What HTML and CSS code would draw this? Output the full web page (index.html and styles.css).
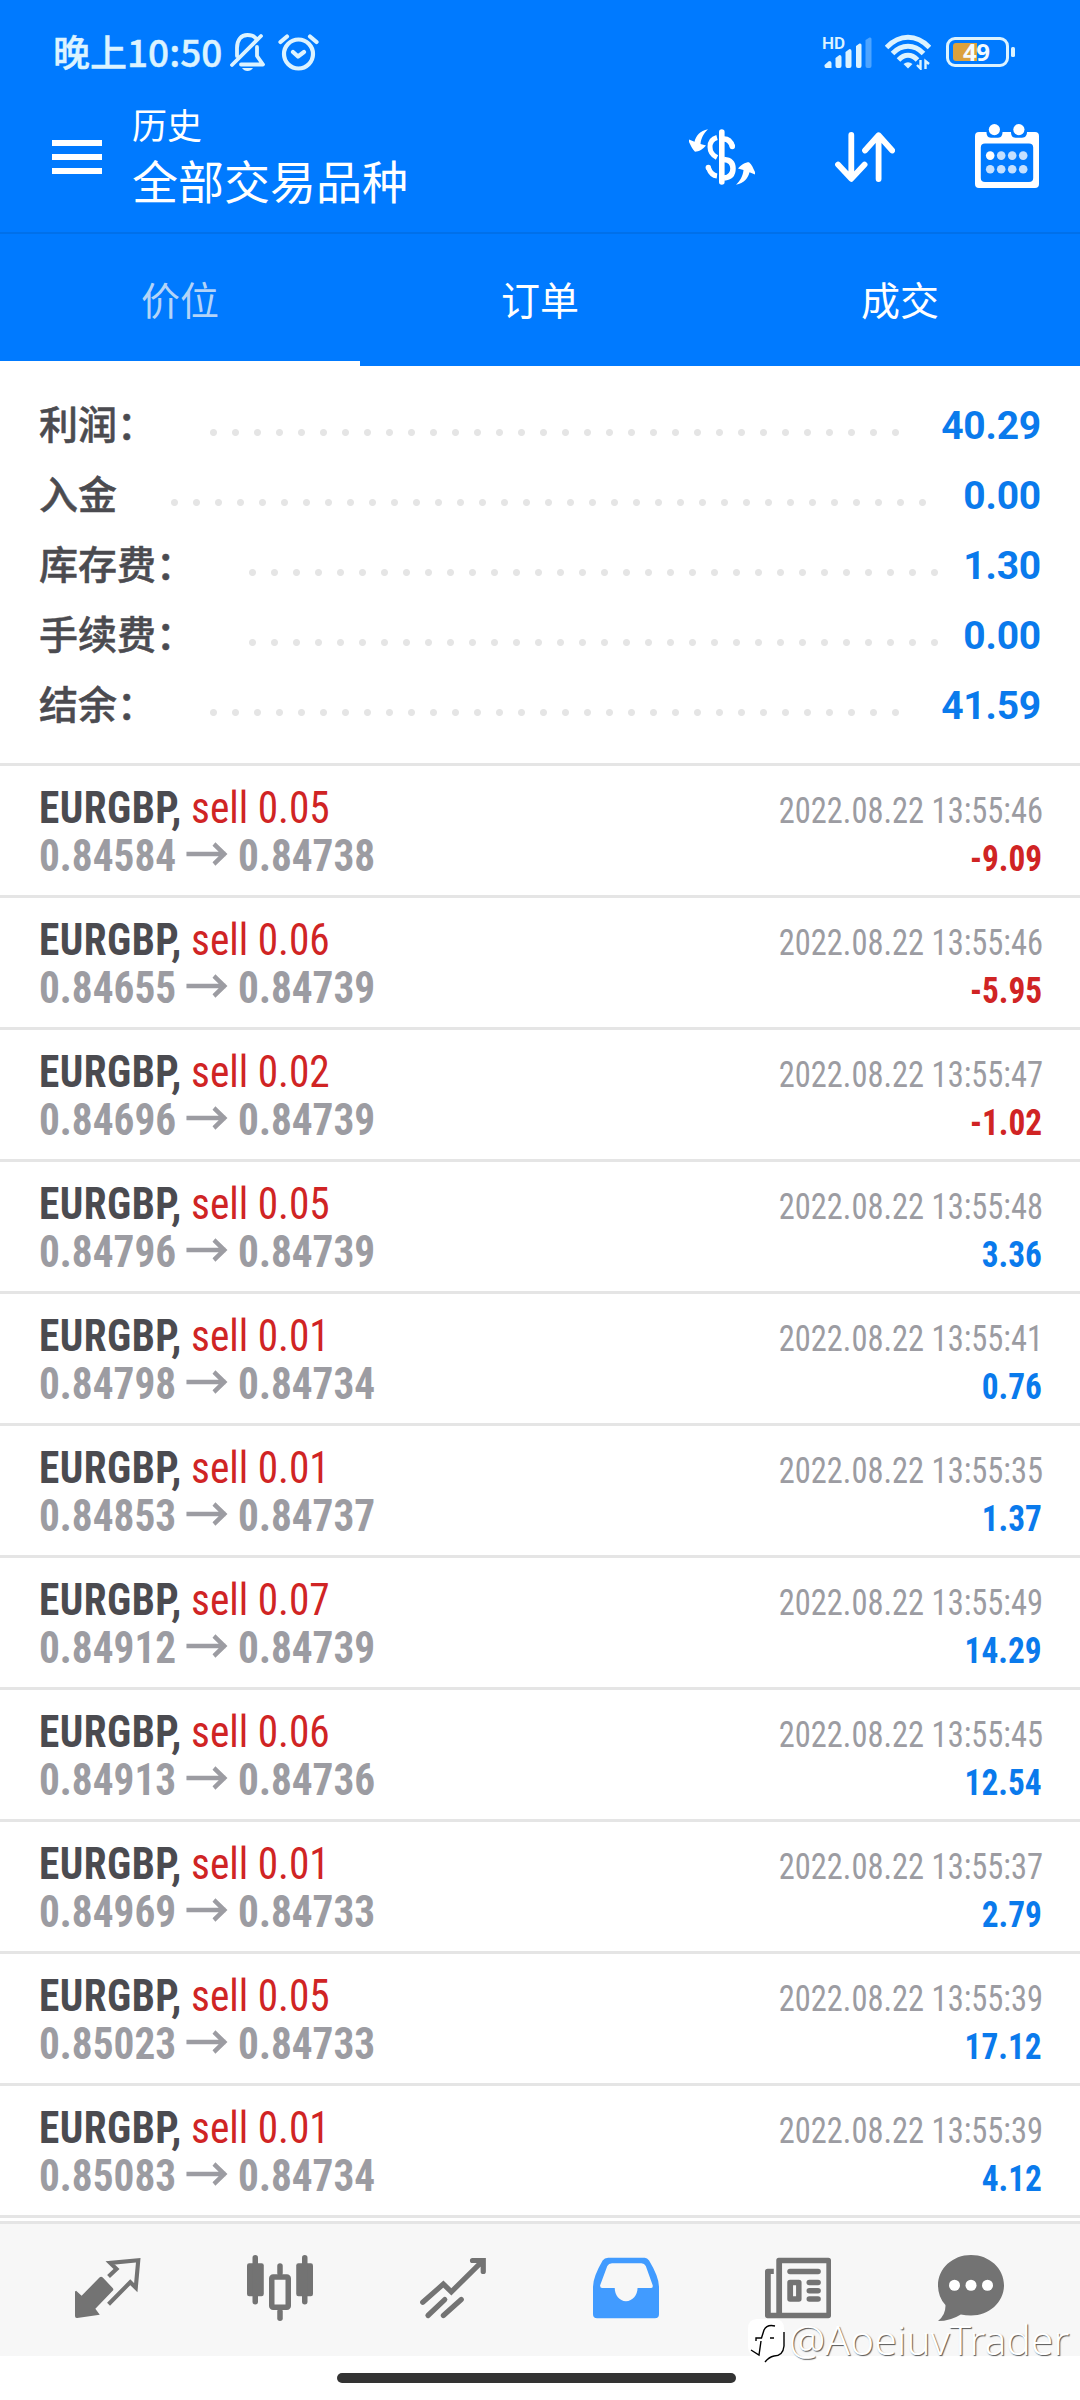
FILE: index.html
```html
<!DOCTYPE html>
<html lang="zh-CN">
<head>
<meta charset="utf-8">
<title>历史</title>
<link rel="stylesheet" href="styles.css">
</head>
<body>
<header class="header">
  <div class="status">
    <span class="clock">晚上10:50</span>
    <svg class="bell" width="36" height="38" viewBox="0 0 36 38" fill="none" stroke="currentColor" stroke-width="3.8" stroke-linecap="round" stroke-linejoin="round"><path d="M2 32L31 3M7 23V15C7 7 11 2 17.500 2C21 2 24 3 25.500 5M27 14V23L33 31.500H11"/><path d="M12 35H23Q21 38 17.500 38T12 35Z" fill="currentColor" stroke="none"/></svg>
    <svg class="alarm" width="41" height="38" viewBox="0 0 41 38" fill="none" stroke="currentColor" stroke-width="4.200" stroke-linecap="round" stroke-linejoin="round"><circle cx="20.500" cy="21" r="14.500"/><path d="M15 19L20 23.500L26 19M2.500 9L9 3.500M38.500 9L32 3.500"/></svg>
    <span class="spacer"></span>
    <span class="hd">HD</span>
    <svg class="signal" width="51" height="34" viewBox="0 0 51 34" fill="currentColor"><path d="M2.500 30L7 26Q9.500 26 9.500 28V33H4Q2.500 33 2.500 31ZM13.500 23L17.500 20Q19.500 20 19.500 22V31Q19.500 33 17.500 33H15.500Q13.500 33 13.500 31ZM23.500 17L27.500 14Q29.500 14 29.500 16V31Q29.500 33 27.500 33H25.500Q23.500 33 23.500 31ZM34 11L37.500 8.500Q39.500 8 39.500 10V31Q39.500 33 37.500 33H36Q34 33 34 31Z"/><path opacity=".35" d="M43.500 5L47.500 2.500Q49.500 2 49.500 4V31Q49.500 33 47.500 33H45.500Q43.500 33 43.500 31Z"/></svg>
    <svg class="wifi" width="46" height="36" viewBox="0 0 46 36" fill="none" stroke="currentColor" stroke-width="5"><path d="M1.500 13.500Q11.500 3.300 23 3.300T44.500 13.500M7.500 19.500Q14.500 12.300 23 12.300T38.500 19.500M13.500 26Q18 21.300 23 21.300T32.500 26"/><path d="M18.500 30Q23 26.500 27.500 30L23 34.500Z" fill="currentColor" stroke="none"/><path d="M35.500 26V34.500L32 31M40.500 35V27L44 30" stroke-width="2.400"/></svg>
    <div class="battery"><svg width="70" height="30" viewBox="0 0 70 30"><rect x="1.500" y="1.500" width="60" height="27" rx="7.500" fill="none" stroke="currentColor" stroke-width="3"/><path d="M10 6H31V24H10Q7 24 7 21V9Q7 6 10 6Z" fill="#dba13d"/><rect x="65" y="10" width="4" height="10" rx="1.500" fill="currentColor"/></svg><span class="level">49</span></div>
  </div>
  <div class="toolbar">
    <svg class="menu" width="50" height="34" viewBox="0 0 50 34" fill="#fff"><path d="M0 0H50V6H0ZM0 14H50V20H0ZM0 28H50V34H0Z"/></svg>
    <div class="titles"><div class="title">历史</div><div class="subtitle">全部交易品种</div></div>
    <svg class="money" width="66" height="56" viewBox="0 0 66 56" fill="none" stroke="#fff" stroke-width="5"><path d="M32.800 3V53" stroke-width="5.600" stroke-linecap="round"/><path d="M28 8.500C22.500 10 21 14 21 18C21 23 23 26 28 28.500M28 47C24 46.500 21 43 19.500 39"/><circle cx="19.300" cy="38.500" r="2.700" fill="#fff" stroke="none"/><path d="M35 10C40 10 42 13 43.500 17.500M35 30.500C41 31 44 34 44 39.500C44 45 41 48.500 35 49" stroke-width="5.500"/><circle cx="43.300" cy="17.500" r="2.700" fill="#fff" stroke="none"/><g fill="#fff" stroke="none"><path id="swoop" d="M19 .3C11 2 7 6.500 5.500 12.800L0 10.500V13C2 17 3 20 6 22.700C10 22.700 14 20 17 16.500L11.500 15C12 9 15 4 19 .3Z"/><use href="#swoop" transform="rotate(180 33 28)"/></g></svg>
    <svg class="sort" width="60" height="50" viewBox="0 0 60 50" fill="none" stroke="#fff" stroke-width="5.800" stroke-linecap="round" stroke-linejoin="round"><path d="M16.300 3V46.500M3 32.500L16.300 46.800L29.600 32.500M43.600 47V3.500M30 18.500L43.600 3.200L57.200 18.500"/></svg>
    <svg class="calendar" width="64" height="64" viewBox="0 0 64 64" fill="#fff"><path fill-rule="evenodd" d="M4 8H11.500C11.500 11 12.500 13.700 16 13.700H23C26.500 13.700 27.500 11 27.500 8H36C36 11 37 13.700 40.500 13.700H47C50.500 13.700 52 11 52 8H60Q64 8 64 12V60Q64 64 60 64H4Q0 64 0 60V12Q0 8 4 8ZM10 19.500Q5.800 19.500 5.800 23.500V54Q5.800 58 10 58H54Q58.200 58 58.200 54V23.500Q58.200 19.500 54 19.500Z"/><circle cx="19.400" cy="5.600" r="5.600"/><circle cx="43.900" cy="5.600" r="5.600"/><circle cx="15.200" cy="31.600" r="4.300"/><g fill="#c4e0ff"><circle cx="26.200" cy="31.600" r="4.300"/><circle cx="37.200" cy="31.600" r="4.300"/><circle cx="48.200" cy="31.600" r="4.300"/><circle cx="15.200" cy="45.300" r="4.300"/><circle cx="26.200" cy="45.300" r="4.300"/><circle cx="37.200" cy="45.300" r="4.300"/><circle cx="48.200" cy="45.300" r="4.300"/></g></svg>
  </div>
  <nav class="tabs"><div class="tab tab-active">价位</div><div class="tab">订单</div><div class="tab">成交</div></nav>
</header>
<section class="summary">
  <div class="sum-row"><span class="label">利润：</span><i class="dots" style="--dots:32"></i><b class="value">40.29</b></div>
  <div class="sum-row"><span class="label">入金</span><i class="dots" style="--dots:35"></i><b class="value">0.00</b></div>
  <div class="sum-row"><span class="label">库存费：</span><i class="dots" style="--dots:32"></i><b class="value">1.30</b></div>
  <div class="sum-row"><span class="label">手续费：</span><i class="dots" style="--dots:32"></i><b class="value">0.00</b></div>
  <div class="sum-row"><span class="label">结余：</span><i class="dots" style="--dots:32"></i><b class="value">41.59</b></div>
</section>
<svg width="0" height="0" class="defs"><symbol id="arrow" viewBox="0 0 45 24" preserveAspectRatio="none"><path d="M0 12H42M29.500 2L40.500 12L29.500 22" fill="none" stroke="#9c9ca2" stroke-width="4.600"/></symbol></svg>
<main class="deals">
  <div class="deal"><div class="left"><div class="line"><b class="sym">EURGBP,</b><span class="side">sell 0.05</span></div><div class="line prices"><b>0.84584</b><svg><use href="#arrow"/></svg><b>0.84738</b></div></div><div class="right"><div class="date">2022.08.22 13:55:46</div><b class="profit loss">-9.09</b></div></div>
  <div class="deal"><div class="left"><div class="line"><b class="sym">EURGBP,</b><span class="side">sell 0.06</span></div><div class="line prices"><b>0.84655</b><svg><use href="#arrow"/></svg><b>0.84739</b></div></div><div class="right"><div class="date">2022.08.22 13:55:46</div><b class="profit loss">-5.95</b></div></div>
  <div class="deal"><div class="left"><div class="line"><b class="sym">EURGBP,</b><span class="side">sell 0.02</span></div><div class="line prices"><b>0.84696</b><svg><use href="#arrow"/></svg><b>0.84739</b></div></div><div class="right"><div class="date">2022.08.22 13:55:47</div><b class="profit loss">-1.02</b></div></div>
  <div class="deal"><div class="left"><div class="line"><b class="sym">EURGBP,</b><span class="side">sell 0.05</span></div><div class="line prices"><b>0.84796</b><svg><use href="#arrow"/></svg><b>0.84739</b></div></div><div class="right"><div class="date">2022.08.22 13:55:48</div><b class="profit">3.36</b></div></div>
  <div class="deal"><div class="left"><div class="line"><b class="sym">EURGBP,</b><span class="side">sell 0.01</span></div><div class="line prices"><b>0.84798</b><svg><use href="#arrow"/></svg><b>0.84734</b></div></div><div class="right"><div class="date">2022.08.22 13:55:41</div><b class="profit">0.76</b></div></div>
  <div class="deal"><div class="left"><div class="line"><b class="sym">EURGBP,</b><span class="side">sell 0.01</span></div><div class="line prices"><b>0.84853</b><svg><use href="#arrow"/></svg><b>0.84737</b></div></div><div class="right"><div class="date">2022.08.22 13:55:35</div><b class="profit">1.37</b></div></div>
  <div class="deal"><div class="left"><div class="line"><b class="sym">EURGBP,</b><span class="side">sell 0.07</span></div><div class="line prices"><b>0.84912</b><svg><use href="#arrow"/></svg><b>0.84739</b></div></div><div class="right"><div class="date">2022.08.22 13:55:49</div><b class="profit">14.29</b></div></div>
  <div class="deal"><div class="left"><div class="line"><b class="sym">EURGBP,</b><span class="side">sell 0.06</span></div><div class="line prices"><b>0.84913</b><svg><use href="#arrow"/></svg><b>0.84736</b></div></div><div class="right"><div class="date">2022.08.22 13:55:45</div><b class="profit">12.54</b></div></div>
  <div class="deal"><div class="left"><div class="line"><b class="sym">EURGBP,</b><span class="side">sell 0.01</span></div><div class="line prices"><b>0.84969</b><svg><use href="#arrow"/></svg><b>0.84733</b></div></div><div class="right"><div class="date">2022.08.22 13:55:37</div><b class="profit">2.79</b></div></div>
  <div class="deal"><div class="left"><div class="line"><b class="sym">EURGBP,</b><span class="side">sell 0.05</span></div><div class="line prices"><b>0.85023</b><svg><use href="#arrow"/></svg><b>0.84733</b></div></div><div class="right"><div class="date">2022.08.22 13:55:39</div><b class="profit">17.12</b></div></div>
  <div class="deal"><div class="left"><div class="line"><b class="sym">EURGBP,</b><span class="side">sell 0.01</span></div><div class="line prices"><b>0.85083</b><svg><use href="#arrow"/></svg><b>0.84734</b></div></div><div class="right"><div class="date">2022.08.22 13:55:39</div><b class="profit">4.12</b></div></div>
</main>
<footer class="nav">
  <div class="nav-item"><svg viewBox="0 0 24 24"><path fill="currentColor" d="M0 13.300L.4 13L2.400 14.800L8.900 8.200Q9.500 7.700 10.100 8.200L13.700 12Q14.200 12.500 13.700 13L7.400 19.500L9 21.700L.8 22.900Q0 23 0 22.200Z"/><path fill="none" stroke="currentColor" stroke-width="1.500" d="M12.200 7.800L15.100 5.100L12.800 2.900L23 1.900L22.100 11.900L20.100 9.900L12.200 17.900"/></svg></div>
  <div class="nav-item"><svg viewBox="0 0 24 24" fill="currentColor"><rect y="3" width="6.100" height="12" rx=".8"/><rect x="2" width="2" height="18" rx="1"/><rect x="17.900" y="3" width="6.100" height="12" rx=".8"/><rect x="20" width="2" height="18" rx="1"/><rect x="9" y="8" width="6" height="11" rx=".5" fill="none" stroke="currentColor" stroke-width="2"/><rect x="11" y="3" width="2" height="4.500" rx="1"/><rect x="11" y="19.500" width="2" height="4.500" rx="1"/></svg></div>
  <div class="nav-item"><svg viewBox="0 0 24 24" fill="none" stroke="currentColor" stroke-width="1.900" stroke-linecap="round"><path d="M1 17.200L8.500 10.600L11.400 13.400L22.800 2.100M19.100 2H23V6"/><path d="M2.900 22L9 16.200M8.500 22L15 16.200"/></svg></div>
  <div class="nav-item nav-active"><svg viewBox="0 0 24 24"><path fill="currentColor" fill-rule="evenodd" d="M5.500 1H18.800Q19.700 1 20.400 2Q24 8 24 11.500V21.500Q24 23 22.500 23H1.500Q0 23 0 21.500V11.500Q0 8 3.500 2Q4.200 1 5.500 1ZM6.900 3Q5.700 3 5.200 4L2.600 11Q2.500 12 3.300 12H7.900C7.900 14.500 9.600 16.800 12 16.800S16.200 14.500 16.200 12H21Q21.900 12 21.700 11L19.200 4Q18.700 3 17.600 3Z"/></svg></div>
  <div class="nav-item"><svg viewBox="0 0 24 24" fill="currentColor"><path fill-rule="evenodd" d="M5 1H23Q24 1 24 2V22Q24 23 23 23H1Q0 23 0 22V6Q0 5 1 5H3.200V6.900H2.100V21H4.100V2Q4.100 1 5 1ZM6.200 3V21H22.300V3Z"/><rect x="8.100" y="5" width="12.200" height="2" rx="1"/><path fill-rule="evenodd" d="M9.100 9H12.300Q13.300 9 13.300 10V16Q13.300 17 12.300 17H9.100Q8.100 17 8.100 16V10Q8.100 9 9.100 9ZM10.200 11V15H11.300V11Z"/><rect x="15.100" y="9" width="5.200" height="2" rx="1"/><rect x="15.100" y="12" width="5.200" height="2" rx="1"/><rect x="15.100" y="15" width="5.200" height="2" rx="1"/></svg></div>
  <div class="nav-item"><svg viewBox="0 0 24 24"><path fill="currentColor" d="M12 0C18.700 0 24 4.900 24 11S18.700 22 12 22Q10 22 8.300 21.600Q4.500 24 0 24Q2.900 21.700 2.700 18.200Q0 15.300 0 11C0 4.900 5.300 0 12 0Z"/><g fill="#fff"><circle cx="6" cy="11" r="2"/><circle cx="12" cy="11" r="2"/><circle cx="18" cy="11" r="2"/></g></svg></div>
</footer>
<div class="home"><div class="home-bar"></div></div>
<div class="watermark"><svg width="38" height="46" viewBox="0 0 38 46"><path fill="#fff" d="M10 1H28Q37 1 37 11V26Q37 38 27 38H24L18 43V38H10Q1 38 1 28V11Q1 1 10 1Z"/><path fill="none" stroke="#000" stroke-width="1.400" d="M28 8Q20 6 17 12L14.500 20H9V23M23 20H27M14 23L12 37L4 32M37 14V28Q36 38 27 38Q22 39 18 44"/></svg><span>@AoeiuvTrader</span></div>
</body>
</html>
```
FILE: styles.css
```css
* { box-sizing: border-box; }
body { margin: 0; width: 1080px; height: 2400px; position: relative; overflow: hidden; background: #fff; font-family: Roboto, "Noto Sans CJK SC", sans-serif; color: #4b4b50; }
svg { display: block; flex: none; }
.defs { position: absolute; }
.header { background: #007aff; height: 366px; color: #fff; }
.status { height: 104px; display: flex; align-items: flex-start; padding: 33px 64px 0 53px; color: #dcf3ff; }
.clock { font: 500 37px/40px "Noto Sans CJK SC", sans-serif; width: 177px; white-space: nowrap; margin-top: -2px; -webkit-text-stroke: .4px currentColor; }
.alarm { margin-left: 12px; }
.spacer { flex: 1; }
.hd { font: 600 17px/20px Roboto, sans-serif; margin-right: -23px; }
.signal { margin-top: 2px; }
.wifi { margin: 1px 0 0 12px; }
.battery { position: relative; margin: 4px 0 0 15px; }
.level { position: absolute; left: 17px; top: -1px; font: 700 24px/32px "Noto Sans", sans-serif; color: #f4fbff; letter-spacing: -.5px; }
.toolbar { height: 130px; display: flex; align-items: flex-start; padding: 0 41px 0 52px; border-bottom: 2px solid #0070ea; }
.menu { margin-top: 36px; }
.titles { margin: -1px 0 0 30px; width: 557px; font-family: "Noto Sans CJK SC", sans-serif; }
.title { font-size: 35px; line-height: 42px; }
.subtitle { font-size: 46px; line-height: 56px; margin-top: 6px; }
.money { margin-top: 25px; }
.sort { margin: 28px 0 0 80px; }
.calendar { margin: 20px 0 0 auto; }
.tabs { display: grid; grid-template-columns: repeat(3, 1fr); height: 132px; }
.tab { font: 400 39px/128px "Noto Sans CJK SC", sans-serif; text-align: center; height: 132px; }
.tab-active { color: #b3d4f8; border-bottom: 5px solid #fff; }
.summary { height: 400px; padding: 24px 39px 0 39px; border-bottom: 3px solid #e5e5e5; }
.sum-row { height: 70px; display: flex; align-items: flex-start; }
.label { font: 500 39px/64px "Noto Sans CJK SC", sans-serif; -webkit-text-stroke: .5px currentColor; }
.dots { margin: 39px 0 0 54px; height: 7px; width: calc(var(--dots) * 22px - 15px); background: radial-gradient(circle at 3.500px 3.500px, #e5e5e5 3px, transparent 4px) 0 0 / 22px 7px repeat-x; }
.value { margin-left: auto; font-size: 39px; line-height: 72px; letter-spacing: -.2px; color: #0a7aec; }
.deal { height: 132px; border-bottom: 3px solid #e5e5e5; padding: 18px 38px 0 39px; display: flex; justify-content: space-between; font-stretch: 75%; font-family: "Roboto Condensed", Roboto, sans-serif; }
.line { display: flex; align-items: center; height: 48px; font-size: 44px; line-height: 48px; transform: scaleX(.938); transform-origin: left; }
.sym { letter-spacing: .5px; }
.side { color: #d02424; margin-left: 10px; }
.prices { color: #9c9ca2; }
.prices svg { width: 45px; height: 24px; margin: 0 10px 4px 11px; }
.right { display: flex; flex-direction: column; align-items: flex-end; padding-top: 3px; }
.date { font-size: 37px; line-height: 48px; color: #9c9ca2; transform: translateX(1px) scaleX(.878); transform-origin: right; }
.profit { font-size: 37px; line-height: 48px; color: #0a7aec; transform: scaleX(.9); transform-origin: right; }
.loss { color: #d02424; }
.nav { margin-top: 3px; height: 135px; background: #f7f7f7; border-top: 3px solid #e5e5e5; padding: 31px 22px 0 22px; display: grid; grid-template-columns: repeat(6, 1fr); justify-items: center; color: #737373; }
.nav-item svg { width: 66px; height: 66px; margin-left: -1px; }
.nav-active { color: #419bff; }
.home { padding: 17px 7px 0 0; display: flex; justify-content: center; }
.home-bar { width: 399px; height: 10px; border-radius: 5px; background: #333; }
.watermark { position: absolute; left: 747px; top: 2318px; display: flex; color: #fff; }
.watermark span { margin-left: 4px; font: 300 40.800px/42px "Noto Sans", sans-serif; text-shadow: 1px 1px 1px #555; }
```
